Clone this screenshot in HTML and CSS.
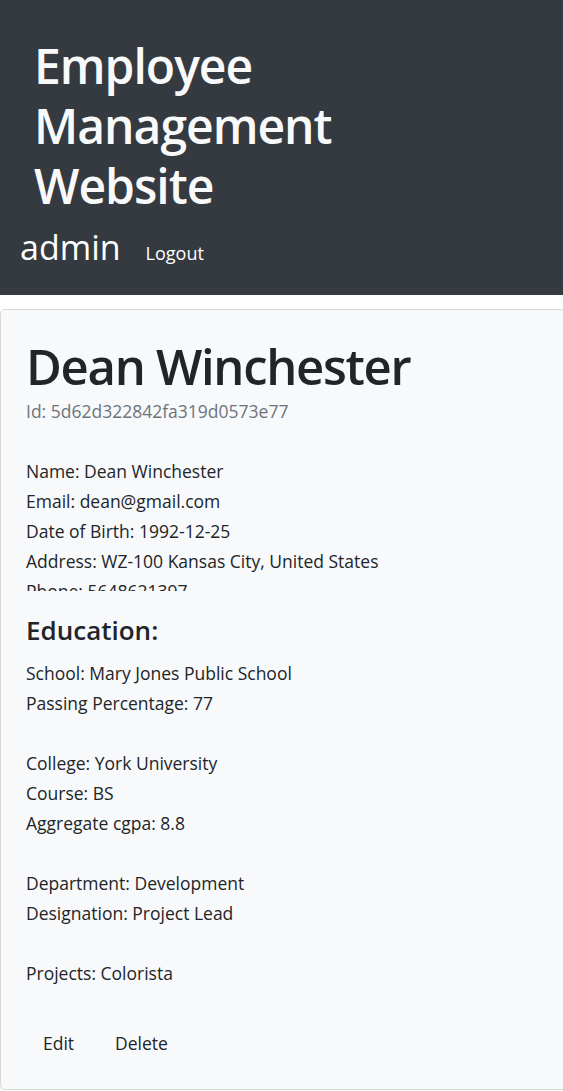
FILE: index.html
```html
<!DOCTYPE html>
<html lang="en">
<head>
<meta charset="utf-8">
<title>Employee Management Website</title>
<link rel="stylesheet" href="styles.css">
</head>
<body>
<header class="site-header">
  <h1 class="site-title">Employee Management Website</h1>
  <nav class="site-nav">
    <span class="brand">admin</span>
    <a class="nav-link" href="#">Logout</a>
  </nav>
</header>
<main class="card">
  <h1 class="emp-name">Dean Winchester</h1>
  <div class="emp-id">Id: 5d62d322842fa319d0573e77</div>
  <div class="info">
    <div class="line">Name: Dean Winchester</div>
    <div class="line">Email: dean@gmail.com</div>
    <div class="line">Date of Birth: 1992-12-25</div>
    <div class="line">Address: WZ-100 Kansas City, United States</div>
    <div class="line">Phone: 5648621397</div>
  </div>
  <h2 class="section-title">Education:</h2>
  <div class="group">
    <div class="line">School: Mary Jones Public School</div>
    <div class="line">Passing Percentage: 77</div>
  </div>
  <div class="group">
    <div class="line">College: York University</div>
    <div class="line">Course: BS</div>
    <div class="line">Aggregate cgpa: 8.8</div>
  </div>
  <div class="group">
    <div class="line">Department: Development</div>
    <div class="line">Designation: Project Lead</div>
  </div>
  <div class="group">
    <div class="line">Projects: Colorista</div>
  </div>
  <div class="actions">
    <button class="btn" type="button">Edit</button>
    <button class="btn" type="button">Delete</button>
  </div>
</main>
</body>
</html>
```
FILE: styles.css
```css
html, body {
  margin: 0;
  padding: 0;
  overflow-x: hidden;
}
body {
  font-family: "Open Sans", "Noto Sans", "Liberation Sans", sans-serif;
  font-size: 17.5px;
  line-height: 30px;
  color: #212529;
  background: #fff;
}
.site-header {
  background: #343a40;
  padding: 36px 20px 22px;
}
.site-title {
  margin: 0;
  padding-left: 14px;
  max-width: 400px;
  font-size: 48px;
  line-height: 60px;
  font-weight: 600;
  letter-spacing: -1px;
  color: #f8f9fa;
}
.site-nav {
  display: flex;
  align-items: baseline;
  gap: 25px;
  margin-top: 6px;
}
.brand {
  font-size: 34px;
  line-height: 51px;
  color: #fff;
}
.nav-link {
  color: #fff;
  text-decoration: none;
  font-size: 18px;
}
.card {
  display: block;
  margin: 14px -12px 0 0;
  border: 1px solid rgba(0, 0, 0, 0.125);
  border-radius: 5px;
  background: #f8f9fa;
  padding: 26px 25px 23px;
}
.emp-name {
  margin: 0;
  font-size: 49px;
  line-height: 60px;
  font-weight: 600;
  letter-spacing: -1.3px;
}
.emp-id {
  color: #6c757d;
}
.info {
  margin-top: 30px;
  height: 135px;
  overflow: hidden;
}
.section-title {
  margin: 24px 0 12px;
  font-size: 26px;
  line-height: 31px;
  font-weight: 600;
}
.group + .group {
  margin-top: 30px;
}
.actions {
  display: flex;
  gap: 9px;
  margin-top: 31px;
  padding-left: 1px;
}
.btn {
  font-family: inherit;
  font-size: 17.5px;
  line-height: 30px;
  color: #212529;
  background: transparent;
  border: 1px solid transparent;
  border-radius: 5px;
  padding: 7.5px 15px;
  cursor: pointer;
}
```
